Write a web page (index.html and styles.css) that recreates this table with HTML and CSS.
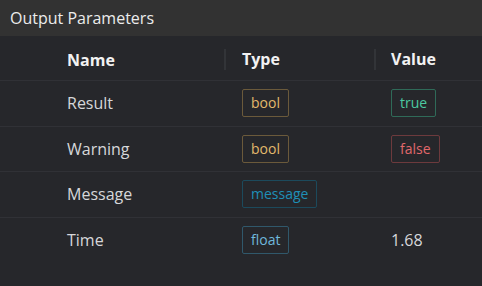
FILE: index.html
```html
<!DOCTYPE html>
<html lang="en">
  <head>
    <title>Output Parameters</title>
    <link rel="stylesheet" href="styles.css">
  </head>
  <body>
    <div class="panel">
      <div class="panel-title">Output Parameters</div>
      <!-- parameter table: name / type / value -->
      <div class="param-table">
        <div class="row head">
          <div class="cell name">Name</div>
          <div class="cell type">Type</div>
          <div class="cell value">Value</div>
        </div>
        <div class="row">
          <div class="cell name">Result</div>
          <div class="cell type"><span class="tag tag-bool">bool</span></div>
          <div class="cell value"><span class="tag tag-true">true</span></div>
        </div>
        <div class="row">
          <div class="cell name">Warning</div>
          <div class="cell type"><span class="tag tag-bool">bool</span></div>
          <div class="cell value"><span class="tag tag-false">false</span></div>
        </div>
        <div class="row">
          <div class="cell name">Message</div>
          <div class="cell type"><span class="tag tag-message">message</span></div>
          <div class="cell value"></div>
        </div>
        <div class="row last">
          <div class="cell name">Time</div>
          <div class="cell type"><span class="tag tag-float">float</span></div>
          <div class="cell value">1.68</div>
        </div>
      </div>
    </div>
  </body>
</html>
```

FILE: styles.css
```css
body {
  margin: 0;
  background-color: #26272b;
  font-family: "Open Sans", "Noto Sans", sans-serif;
  color: #d6d7da;
}

.panel-title {
  height: 36px;
  padding-left: 10px;
  background-color: #323232;
  color: #ececec;
  font-size: 16px;
  line-height: 36px;
}

.row {
  display: grid;
  grid-template-columns: 224px 150px 1fr;
  height: 45.5px;
  border-bottom: 1px solid #303136;
  box-sizing: border-box;
  align-items: center;
}

.row.head {
  height: 45px;
  padding-top: 3px;
  font-weight: bold;
  color: #f2f2f2;
}

.row.last {
  border-bottom: none;
}

.cell {
  font-size: 16px;
}

.cell.name {
  padding-left: 67px;
}

.cell.type {
  padding-left: 18px;
}

.cell.value {
  padding-left: 17px;
}

/* column dividers in the header row */
.head .cell.type,
.head .cell.value {
  border-left: 2px solid #323438;
  line-height: 21px;
  padding-left: 16px;
}

.head .cell.value {
  padding-left: 15px;
}

.tag {
  display: inline-block;
  padding: 0 8px;
  height: 26px;
  line-height: 26px;
  border: 1px solid;
  border-radius: 2px;
  font-size: 14px;
}

.tag-bool {
  color: #e2b96c;
  border-color: #6b5a3b;
}

.tag-true {
  color: #4cc9a0;
  border-color: #2f6a58;
}

.tag-false {
  color: #e0686b;
  border-color: #6d3a3d;
}

.tag-message {
  color: #1f8fb7;
  border-color: #1c4a5c;
}

.tag-float {
  color: #6fb8dc;
  border-color: #30586b;
}
```
